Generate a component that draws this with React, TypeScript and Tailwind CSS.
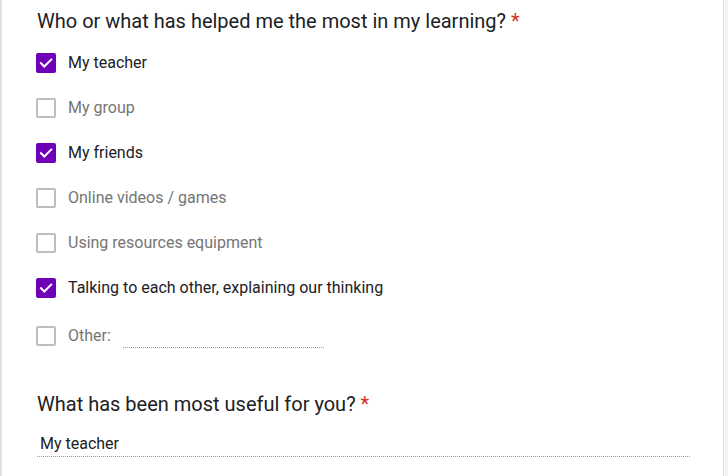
import React from "react";

interface option_item {
  label: string;
  checked: boolean;
}

const options: option_item[] = [
  { label: "My teacher", checked: true },
  { label: "My group", checked: false },
  { label: "My friends", checked: true },
  { label: "Online videos / games", checked: false },
  { label: "Using resources equipment", checked: false },
  { label: "Talking to each other, explaining our thinking", checked: true },
];

function Checkbox({ checked }: { checked: boolean }) {
  if (checked)
    return (
      <span className="flex h-5 w-5 shrink-0 items-center justify-center rounded-[2px] bg-[#7000b8]">
        <svg viewBox="0 0 20 20" className="h-5 w-5" fill="none">
          <path
            d="M5 10.2l3.3 3.3L15.2 6.6"
            stroke="#ffffff"
            strokeWidth="2"
            strokeLinecap="square"
          />
        </svg>
      </span>
    );
  return (
    <span className="h-5 w-5 shrink-0 rounded-[2px] border-2 border-[#bdbdbd] bg-white" />
  );
}

function Required() {
  return <span className="ml-[5px] text-[#d93025]">*</span>;
}

export default function App() {
  return (
    <div
      className="flex h-[476px] w-[728px] bg-[#f3f3f3]"
      style={{ fontFamily: "Roboto, 'Liberation Sans', sans-serif" }}
    >
      <div className="h-full w-[724px] border-l-2 border-r border-[#e0e0e0] bg-white pl-[34px]">
        <div className="pl-[1px] pt-[9px] text-[20px] leading-6 text-[#202124]">
          Who or what has helped me the most in my learning?
          <Required />
        </div>
        <div className="mt-[7px] flex flex-col">
          {options.map((o) => (
            <div key={o.label} className="flex h-[45px] items-center gap-3">
              <Checkbox checked={o.checked} />
              <span
                className={`text-[16px] ${o.checked ? "text-[#202124]" : "text-[#757575]"}`}
              >
                {o.label}
              </span>
            </div>
          ))}
          <div className="flex h-[51px] items-center gap-3">
            <Checkbox checked={false} />
            <span className="text-[16px] text-[#757575]">Other:</span>
            <span className="h-6 w-[201px] border-b border-dotted border-[#9e9e9e]" />
          </div>
        </div>
        <div className="mt-[31px] pl-[1px] text-[20px] leading-6 text-[#202124]">
          What has been most useful for you?
          <Required />
        </div>
        <div className="mt-3 ml-[1px] flex h-[29px] w-[653px] items-center border-b border-dotted border-[#9e9e9e] pl-[3px] pt-[3px] text-[16px] text-[#202124]">
          My teacher
        </div>
      </div>
    </div>
  );
}
